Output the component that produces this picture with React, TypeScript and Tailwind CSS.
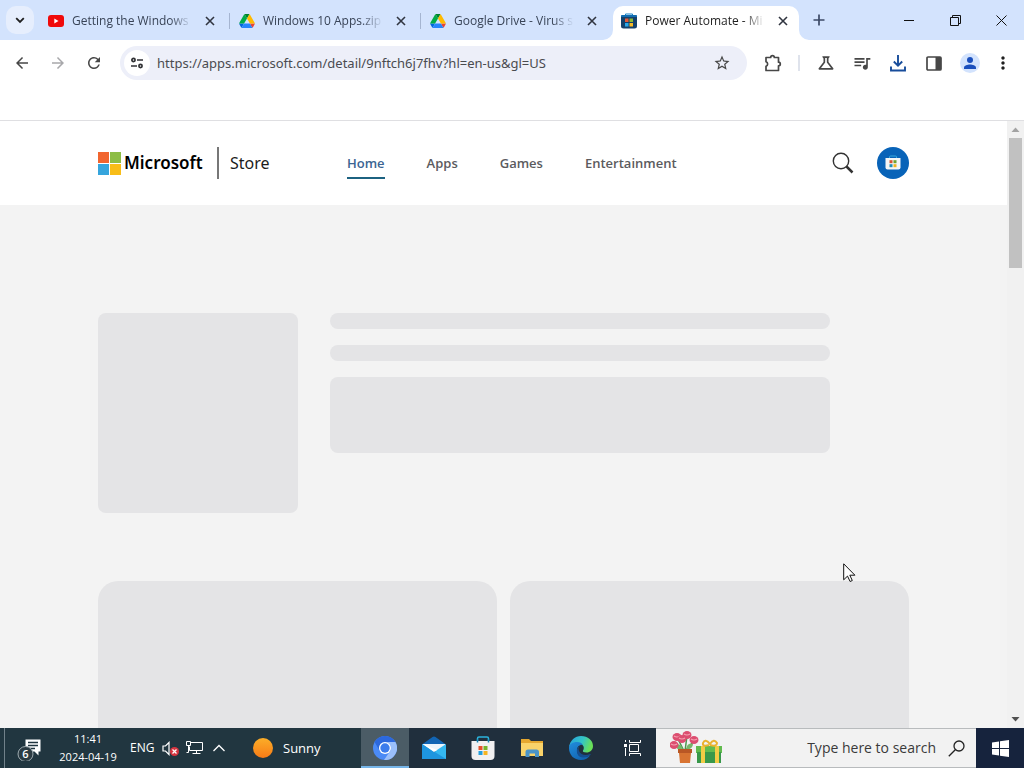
import { useState } from "react";
import type { ReactNode } from "react";
import { MdOutlineScience, MdQueueMusic, MdStarBorder, MdRefresh, MdArrowBack, MdArrowForward, MdMoreVert } from "react-icons/md";

type TabInfo = { title: string; icon: ReactNode };

const TABS: TabInfo[] = [
    { title: "Getting the Windows", icon: <YouTubeIcon /> },
    { title: "Windows 10 Apps.zip", icon: <DriveIcon /> },
    { title: "Google Drive - Virus s", icon: <DriveIcon /> },
    { title: "Power Automate - Mi", icon: <StoreFavicon /> },
];

const NAV = ["Home", "Apps", "Games", "Entertainment"];

export default function App() {
    const [url, setUrl] = useState("https://apps.microsoft.com/detail/9nftch6j7fhv?hl=en-us&gl=US");

    return (
        <div className="relative flex h-screen flex-col overflow-hidden bg-white font-['Open_Sans','Noto_Sans',sans-serif] text-[#1f1f1f]">
            <TabStrip />

            {/* Toolbar */}
            <div className="flex h-[46px] shrink-0 items-center pl-3 pr-[11px] text-[#474747]">
                <button aria-label="Back" className="flex w-5 justify-center"><MdArrowBack size={18} /></button>
                <button aria-label="Forward" className="ml-4 flex w-5 justify-center text-[#a8a8ab]"><MdArrowForward size={18} /></button>
                <button aria-label="Reload" className="ml-4 flex w-5 justify-center"><MdRefresh size={18} /></button>
                <div className="ml-4 flex h-[34px] min-w-0 flex-1 items-center rounded-full bg-[#edeff9] pl-1 pr-4">
                    <button aria-label="View site information" className="flex size-[26px] items-center justify-center rounded-full bg-white">
                        <TuneIcon />
                    </button>
                    <input
                        aria-label="Address and search bar"
                        className="ml-[7px] min-w-0 flex-1 bg-transparent font-['Noto_Sans',sans-serif] text-[13px] leading-5 text-[#4a4b50] outline-none"
                        value={url}
                        onChange={(e) => setUrl(e.target.value)}
                    />
                    <button aria-label="Bookmark this tab"><MdStarBorder size={18} /></button>
                </div>
                <button aria-label="Extensions" className="ml-4 flex w-5 justify-center"><ExtensionIcon /></button>
                <span className="ml-[15px] h-4 w-0.5 bg-[#dfe3ec]" />
                <button aria-label="Labs" className="ml-4 flex w-5 justify-center"><MdOutlineScience size={20} /></button>
                <button aria-label="Media controls" className="ml-4 flex w-5 justify-center"><MdQueueMusic size={20} /></button>
                <button aria-label="Downloads" className="ml-4 flex w-5 justify-center"><DownloadIcon /></button>
                <button aria-label="Side panel" className="ml-4 flex w-5 justify-center"><SidePanelIcon /></button>
                <button aria-label="Profile" className="ml-4 flex w-5 justify-center"><ProfileIcon /></button>
                <button aria-label="Menu" className="ml-[13px] flex w-5 justify-center text-[#1f1f1f]"><MdMoreVert size={20} /></button>
            </div>
            <div className="h-[35px] shrink-0 border-b border-[#dfdfe2]" />

            {/* Page */}
            <div className="flex min-h-0 flex-1">
                <main className="min-w-0 flex-1 overflow-hidden bg-[#f3f3f3]">
                    <StoreHeader />
                    <Skeleton />
                </main>
                <ScrollBar />
            </div>

            <Taskbar />

            <svg className="pointer-events-none absolute left-[843px] top-[563px]" width="13" height="20" viewBox="0 0 13 20">
                <path d="M.7.8v16l3.8-3.7 2.6 5.4 2.2-1-2.5-5.3h5.1z" fill="#fff" stroke="#111" strokeWidth="1" />
            </svg>
        </div>
    );
}

function TabStrip() {
    const [active, setActive] = useState(3);
    return (
        <div className="flex h-10 shrink-0 bg-[#d3e3fd]">
            <button aria-label="Search tabs" className="ml-1.5 mt-1.5 flex size-7 shrink-0 items-center justify-center rounded-[10px] bg-[#e6eefd]">
                <svg width="10" height="7" viewBox="0 0 10 7"><path d="M1.2 1.2 5 5l3.8-3.8" fill="none" stroke="#1f1f1f" strokeWidth="1.8" /></svg>
            </button>
            <div role="tablist" className="ml-1.5 flex min-w-0">
                {TABS.map((tab, i) => {
                    const isActive = i === active;
                    return (
                        <div
                            key={tab.title}
                            className={
                                "relative flex h-[34px] w-[191px] min-w-0 items-center self-end pb-1 pl-2 last:w-[186px] " +
                                (isActive ? "rounded-t-[10px] bg-white" : "")
                            }
                        >
                            {isActive && <TabFeet />}
                            <button role="tab" aria-selected={isActive} onClick={() => setActive(i)} className="flex min-w-0 items-center gap-2">
                                <span className="flex size-4 shrink-0 items-center justify-center">{tab.icon}</span>
                                <span className={"w-[120px] overflow-hidden whitespace-nowrap text-left text-xs leading-4 [mask-image:linear-gradient(to_right,black_82%,transparent)] " + (isActive ? "text-[#1f1f1f]" : "text-[#394457]")}>
                                    {tab.title}
                                </span>
                            </button>
                            <button aria-label={"Close " + tab.title} className="ml-2.5 flex size-4 shrink-0 items-center justify-center">
                                <svg width="10" height="10" viewBox="0 0 10 10"><path d="m1 1 8 8M9 1 1 9" stroke="#303540" strokeWidth="1.6" /></svg>
                            </button>
                            {!isActive && i + 1 !== active && <span className="ml-[11px] h-4 w-px bg-[#a5b5d1]" />}
                        </div>
                    );
                })}
            </div>
            <button aria-label="New tab" className="ml-3 flex w-4 items-center justify-center">
                <svg width="12" height="12" viewBox="0 0 12 12"><path d="M6 .5v11M.5 6h11" stroke="#3c4a66" strokeWidth="1.7" /></svg>
            </button>
            <div className="ml-auto flex">
                <button aria-label="Minimize" className="flex w-[46px] items-center justify-center">
                    <svg width="10" height="10" viewBox="0 0 10 10"><path d="M0 5.5h10" stroke="#111" /></svg>
                </button>
                <button aria-label="Restore" className="flex w-[46px] items-center justify-center">
                    <svg width="11" height="11" viewBox="0 0 11 11"><path d="M.5 2.5h8v8h-8zM2.5 2.5v-2h8v8h-2" fill="none" stroke="#111" /></svg>
                </button>
                <button aria-label="Close" className="flex w-[46px] items-center justify-center">
                    <svg width="11" height="11" viewBox="0 0 11 11"><path d="m.5.5 10 10M10.5.5l-10 10" stroke="#111" /></svg>
                </button>
            </div>
        </div>
    );
}

// Concave corners where the active tab meets the toolbar
function TabFeet() {
    return (
        <>
            <svg className="absolute -left-2.5 bottom-0" width="10" height="10"><path d="M10 0v10H0A10 10 0 0 0 10 0" fill="#fff" /></svg>
            <svg className="absolute -right-2.5 bottom-0" width="10" height="10"><path d="M0 0v10h10A10 10 0 0 1 0 0" fill="#fff" /></svg>
        </>
    );
}

function StoreHeader() {
    const [current, setCurrent] = useState("Home");
    return (
        <header className="flex h-[84px] items-center bg-white px-[98px]">
            <a href="#microsoft" className="flex items-center gap-[3px]">
                <svg width="23" height="23" viewBox="0 0 23 23">
                    <path d="M0 0h11v11H0z" fill="#f1652f" />
                    <path d="M12 0h11v11H12z" fill="#8dbd45" />
                    <path d="M0 12h11v11H0z" fill="#36a5dd" />
                    <path d="M12 12h11v11H12z" fill="#f8bd18" />
                </svg>
                <span className="w-20 whitespace-nowrap font-['Noto_Sans',sans-serif] text-[17px] font-semibold leading-6 text-black">Microsoft</span>
            </a>
            <span className="ml-[13px] h-8 w-0.5 bg-[#777]" />
            <a href="#store" className="ml-[11px] w-[42px] font-['Noto_Sans',sans-serif] text-base leading-6 text-[#1b1b1b]">Store</a>
            <nav className="ml-[75px] flex gap-[42px] pt-1 text-[13px] font-semibold leading-5">
                {NAV.map((item) => (
                    <a
                        key={item}
                        href={"#" + item.toLowerCase()}
                        onClick={() => setCurrent(item)}
                        className={
                            "mt-0.5 border-b-2 pb-1 " +
                            (item === current ? "border-[#1c6281] text-[#3b6492]" : "border-transparent text-[#5b5b5e]")
                        }
                    >
                        {item}
                    </a>
                ))}
            </nav>
            <button aria-label="Search" className="ml-auto">
                <svg width="22" height="22" viewBox="0 0 22 22" fill="none" stroke="#333">
                    <circle cx="9" cy="9" r="7.7" strokeWidth="1.4" />
                    <path d="m14.5 14.5 6 6" strokeWidth="2.5" />
                </svg>
            </button>
            <button aria-label="Account" className="ml-[23px] flex size-8 items-center justify-center rounded-full bg-[#0863b8]">
                <svg width="16" height="16" viewBox="0 0 16 16">
                    <path d="M4.5 3V2q0-1 1-1h5q1 0 1 1v1" fill="none" stroke="#36a9dd" strokeWidth="1" />
                    <path d="M.5 3h15v9.5q0 2-2 2h-11q-2 0-2-2z" fill="#f4f6f6" />
                    <path d="M4.5 5.2h3v3h-3z" fill="#d75431" />
                    <path d="M8.5 5.2h3v3h-3z" fill="#6fa330" />
                    <path d="M4.5 9.2h3v3h-3z" fill="#218eb5" />
                    <path d="M8.5 9.2h3v3h-3z" fill="#f0b51e" />
                </svg>
            </button>
        </header>
    );
}

function Skeleton() {
    return (
        <div className="px-[98px] pt-[108px]">
            <div className="flex gap-8">
                <div className="size-[200px] shrink-0 rounded-lg bg-[#e4e4e6]" />
                <div className="flex max-w-[500px] flex-1 flex-col gap-4">
                    <div className="h-4 rounded-lg bg-[#e4e4e6]" />
                    <div className="h-4 rounded-lg bg-[#e4e4e6]" />
                    <div className="h-[76px] rounded-lg bg-[#e4e4e6]" />
                </div>
            </div>
            <div className="mt-[68px] grid grid-cols-2 gap-[13px]">
                <div className="h-80 rounded-[20px] bg-[#e4e4e6]" />
                <div className="h-80 rounded-[20px] bg-[#e4e4e6]" />
            </div>
        </div>
    );
}

function ScrollBar() {
    return (
        <div className="flex w-[17px] shrink-0 flex-col items-center bg-[#f1f1f1]">
            <svg className="shrink-0" width="17" height="17" viewBox="0 0 17 17"><path d="m4.5 11 4-4.5 4 4.5z" fill="#a3a3a3" /></svg>
            <div className="h-[130px] w-[13px] bg-[#c1c1c1]" />
            <svg className="mt-auto shrink-0" width="17" height="17" viewBox="0 0 17 17"><path d="m4.5 6 4 4.5 4-4.5z" fill="#505050" /></svg>
        </div>
    );
}

function Taskbar() {
    return (
        <footer className="flex h-10 shrink-0 bg-[#213640] text-white">
            <span className="ml-1 w-px bg-[#71818a]" />
            <button aria-label="Notifications" className="ml-3 flex w-7 items-center">
                <svg width="26" height="26" viewBox="0 0 26 26">
                    <path d="M8.5 4.5h15v12h-2v4l-4-4h-9z" fill="#fff" />
                    <path d="M11 7.5h10M11 10.5h10M11 13.5h7" stroke="#213640" strokeWidth="1.3" />
                    <circle cx="8.5" cy="19" r="7.5" fill="#2b3b43" stroke="#9eabb0" />
                    <text x="8.5" y="23" textAnchor="middle" fontSize="11" fontWeight="600" fill="#fff">6</text>
                </svg>
            </button>
            <div className="ml-2 w-[70px] whitespace-nowrap pt-0.5 text-center text-[11px] leading-[18px]">
                <div>11:41</div>
                <div>2024-04-19</div>
            </div>
            <button className="ml-[7px] w-6 self-center text-xs leading-5">ENG</button>
            <button aria-label="Volume muted" className="ml-2 flex w-[18px] items-center">
                <svg width="18" height="18" viewBox="0 0 18 18">
                    <path d="M1 7h2.500L7 3.500v12L3.500 12H1z" fill="none" stroke="#fff" strokeWidth="1.2" />
                    <circle cx="12.5" cy="12.5" r="4.500" fill="#d5343f" />
                    <path d="m10.5 10.5 4 4m0-4-4 4" stroke="#fff" strokeWidth="1.3" />
                </svg>
            </button>
            <button aria-label="Network" className="ml-1.5 flex w-[17px] items-center">
                <svg width="17" height="16" viewBox="0 0 17 16" fill="none" stroke="#fff">
                    <path d="M5 2.5h11.500v8H3.500V6.500M10.500 10.500v3M6.500 13.500h8M.500 1.500h4v4h-4zM2.500 5.500v7h-2" />
                </svg>
            </button>
            <button aria-label="Show hidden icons" className="ml-2.5 flex w-3 items-center">
                <svg width="12" height="8" viewBox="0 0 12 8"><path d="m.5 7 5.500-5.500L11.500 7" fill="none" stroke="#fff" strokeWidth="1.3" /></svg>
            </button>
            <button className="ml-7 flex items-center gap-2.5 text-[13px] leading-5">
                <span className="size-5 rounded-full bg-gradient-to-b from-[#fbae28] to-[#f77a16]" />
                Sunny
            </button>
            <div className="ml-auto flex bg-[#202f3d]">
                <button aria-label="Chromium" className="flex w-12 items-center justify-center border-b-2 border-[#76b5e8] bg-[#4b5c66] pt-0.5"><ChromiumIcon /></button>
                <button aria-label="Mail" className="ml-px flex w-12 items-center justify-center"><MailIcon /></button>
                <button aria-label="Microsoft Store" className="ml-px flex w-12 items-center justify-center"><StoreIcon /></button>
                <button aria-label="File Explorer" className="ml-px flex w-12 items-center justify-center"><FolderIcon /></button>
                <button aria-label="Edge" className="ml-px flex w-12 items-center justify-center"><EdgeIcon /></button>
                <button aria-label="Task view" className="ml-[3px] flex w-12 items-center justify-center">
                    <svg width="17" height="16" viewBox="0 0 17 16" fill="none" stroke="#fff">
                        <path d="M5.5 0v2.500h11V0M5.500 4.500h9v7h-9zM5.500 16v-2.500h11V16M1.500 0v2M1.500 8v8" />
                        <path d="M0 4h3v3H0z" fill="#fff" stroke="none" />
                    </svg>
                </button>
            </div>
            <label className="flex w-80 items-center border-y border-[#b8bbbd] bg-[#f2f2f2] pl-3.5">
                <FlowersIcon />
                <input
                    aria-label="Type here to search"
                    placeholder="Type here to search"
                    className="min-w-0 flex-1 bg-transparent text-right text-sm leading-5 text-[#222] outline-none placeholder:text-[#3a3a3a]"
                />
                <svg className="ml-3 mr-[11px]" width="17" height="17" viewBox="0 0 17 17" fill="none" stroke="#222" strokeWidth="1.3">
                    <circle cx="11" cy="6" r="5" />
                    <path d="M7.3 9.7.8 16.2" />
                </svg>
            </label>
            <button aria-label="Start" className="flex w-12 items-center justify-center bg-[#16233d]">
                <svg width="17" height="17" viewBox="0 0 17 17" fill="#fff">
                    <path d="M0 2.5 7 1.5V8H0zM8 1.3 17 0v8H8zM0 9h7v6.500l-7-1zM8 9h9v8l-9-1.300z" />
                </svg>
            </button>
        </footer>
    );
}

function YouTubeIcon() {
    return (
        <svg width="16" height="12" viewBox="0 0 16 12">
            <rect width="16" height="12" rx="3" fill="#f00a0a" />
            <path d="m6.3 3.5 4.2 2.5-4.2 2.5z" fill="#fff" />
        </svg>
    );
}

function DriveIcon() {
    return (
        <svg className="shrink-0" width="16" height="14" viewBox="0 0 87.3 78">
            <path d="m6.6 66.85 3.85 6.65c.8 1.4 1.95 2.5 3.3 3.3L27.5 53H0c0 1.55.4 3.1 1.2 4.5z" fill="#0066da" />
            <path d="M43.65 25 29.9 1.2c-1.35.8-2.5 1.9-3.3 3.3L1.2 48.5A9 9 0 0 0 0 53h27.5z" fill="#00ac47" />
            <path d="M73.55 76.8c1.35-.8 2.5-1.9 3.3-3.3l1.6-2.75L86.1 57.5c.8-1.4 1.2-2.95 1.2-4.5H59.8l5.85 11.5z" fill="#ea4335" />
            <path d="M43.65 25 57.4 1.2C56.05.4 54.5 0 52.9 0H34.4c-1.6 0-3.15.45-4.5 1.2z" fill="#00832d" />
            <path d="M59.8 53H27.5L13.75 76.8c1.35.8 2.9 1.2 4.5 1.2h50.8c1.6 0 3.15-.45 4.5-1.2z" fill="#2684fc" />
            <path d="M73.4 26.5 60.7 4.5c-.8-1.4-1.95-2.5-3.3-3.3L43.65 25 59.8 53h27.45c0-1.55-.4-3.1-1.2-4.5z" fill="#ffba00" />
        </svg>
    );
}

function StoreFavicon() {
    return (
        <svg width="16" height="16" viewBox="0 0 16 16">
            <path d="M4.5 3V1h7v2" fill="none" stroke="#1683c9" />
            <path d="M1 2.500h14a1 1 0 0 1 1 1V13a2.500 2.500 0 0 1-2.500 2.500h-11A2.500 2.500 0 0 1 0 13V3.500a1 1 0 0 1 1-1" fill="#14416c" />
            <path d="M0 4V3a1 1 0 0 1 1-1h14a1 1 0 0 1 1 1v1z" fill="#126db0" />
            <path d="M4 5.500h3.500V9H4z" fill="#e65a36" />
            <path d="M8.500 5.500H12V9H8.500z" fill="#8cb936" />
            <path d="M4 10h3.500v3.500H4z" fill="#28a8ea" />
            <path d="M8.500 10H12v3.500H8.500z" fill="#f8bb25" />
        </svg>
    );
}

function TuneIcon() {
    return (
        <svg width="14" height="12" viewBox="0 0 14 12" fill="none" stroke="#303134" strokeWidth="1.7">
            <circle cx="3.500" cy="3" r="1.600" />
            <path d="M7 3h6M1 9h6" />
            <circle cx="10.500" cy="9" r="1.600" />
        </svg>
    );
}

function ExtensionIcon() {
    return (
        <svg width="18" height="18" viewBox="0 0 18 18" fill="none" stroke="#474747" strokeWidth="1.7">
            <path d="M2 3.500h4.700a1.800 1.800 0 0 1 3.600 0h4.200v4.700a1.800 1.800 0 0 1 0 3.600v4.700H2v-4.300a2.300 2.300 0 0 0 0-4.400z" strokeLinejoin="round" />
        </svg>
    );
}

function DownloadIcon() {
    return (
        <svg width="16" height="17" viewBox="0 0 16 17" fill="none" stroke="#184d9b" strokeWidth="1.9">
            <path d="M8 0v10.500M3.800 6.500 8 10.700l4.200-4.200M1 11.500v4h14v-4" />
        </svg>
    );
}

function SidePanelIcon() {
    return (
        <svg width="16" height="15" viewBox="0 0 16 15">
            <rect x="1" y="1" width="14" height="13" rx="1" fill="none" stroke="#474747" strokeWidth="1.7" />
            <path d="M9.500 1H15v13H9.500z" fill="#474747" />
        </svg>
    );
}

function ProfileIcon() {
    return (
        <svg width="20" height="20" viewBox="0 0 20 20">
            <circle cx="10" cy="10" r="10" fill="#d3e3fd" />
            <circle cx="10" cy="7" r="3" fill="#1a4fbd" />
            <path d="M4 16v-1.500c0-2 3.500-3 6-3s6 1 6 3V16z" fill="#1a4fbd" />
        </svg>
    );
}

function ChromiumIcon() {
    return (
        <svg width="24" height="24" viewBox="0 0 24 24">
            <circle cx="12" cy="12" r="12" fill="#4b8af5" />
            <path d="M12 6h10.400A12 12 0 0 1 11 24l6.200-9a6 6 0 0 0-5.200-9" fill="#9bbffa" />
            <path d="M1.600 6a12 12 0 0 1 20.800 0H12a6 6 0 0 0-5.200 9z" fill="#2c68dd" />
            <circle cx="12" cy="12" r="6" fill="#fff" />
            <circle cx="12" cy="12" r="4.700" fill="#3c7cec" />
        </svg>
    );
}

function MailIcon() {
    return (
        <svg width="24" height="24" viewBox="0 0 24 24">
            <path d="M0 8.500 10.500 1q1.500-1 3 0L24 8.500V14H0z" fill="#1265b4" />
            <path d="M1 8h22v7H1z" fill="#edf5fb" />
            <path d="m0 8 12 8 12-8v15H0z" fill="#35b8f1" />
            <path d="m0 8 24 15H0z" fill="#1e95df" />
            <path d="m1 8 11 8 3-2z" fill="#fff" />
        </svg>
    );
}

function StoreIcon() {
    return (
        <svg width="24" height="24" viewBox="0 0 24 24">
            <path d="M6.500 7V2.500q0-1.500 1.500-1.500h8q1.500 0 1.500 1.500V7" fill="none" stroke="#2bb4dd" strokeWidth="1.5" />
            <path d="M.5 5h23v15q0 4-4 4h-15q-4 0-4-4z" fill="#f1f0f1" />
            <path d="M6.500 3.500v3M17.500 3.500v3" stroke="#1684b5" strokeWidth="1.5" />
            <path d="M7.500 10h4v4h-4z" fill="#e64f2b" />
            <path d="M12.500 10h4v4h-4z" fill="#75b52d" />
            <path d="M7.500 15h4v4h-4z" fill="#229fde" />
            <path d="M12.500 15h4v4h-4z" fill="#f5b421" />
        </svg>
    );
}

function FolderIcon() {
    return (
        <svg width="22" height="20" viewBox="0 0 22 20">
            <path d="M0 1h8l2 2h12v5H0z" fill="#e5a72f" />
            <path d="M0 5h22v13H0z" fill="#f9d36a" />
            <path d="M4.500 19v-5q0-2.500 2.500-2.500h8.500q2.500 0 2.500 2.500v5h-4v-3.500H8.500V19z" fill="#4a94c9" />
        </svg>
    );
}

function EdgeIcon() {
    return (
        <svg width="24" height="24" viewBox="0 0 24 24">
            <defs>
                <linearGradient id="edge-top" x1="0" y1="0" x2="1" y2="0.3">
                    <stop offset="0" stopColor="#259fdf" />
                    <stop offset="0.6" stopColor="#34c5c6" />
                    <stop offset="1" stopColor="#69df58" />
                </linearGradient>
                <linearGradient id="edge-side" x1="0" y1="0" x2="0.7" y2="1">
                    <stop offset="0" stopColor="#218ddd" />
                    <stop offset="1" stopColor="#1163b0" />
                </linearGradient>
            </defs>
            <path d="M0 11C1 4.500 6 0 12 0c7 0 12 4.500 12 10 0 4-3 6.500-6.500 6.500-3 0-4-1-3.500-2 1.200-1.300 1.200-4-.5-5.500C9 5 3 7 0 11" fill="url(#edge-top)" />
            <path d="M0 12c0-4 4-6 8-6 3 0 5 1.300 6 3-2.800-.7-6.500 1.500-6 6 .4 4 4 6.500 8 6 2-.2 4-1 5.500-2.300C19.500 22 16 24 12 24 5 24 0 19 0 12" fill="url(#edge-side)" />
            <path d="M10.500 10C7 12 7 18 10.500 20.500c4 2.500 8.500 0 11-1.800.4-.4 0-1-.5-.7-4 2-9.500 1.200-11-3-.7-2-.5-3.500.5-5" fill="#154d8e" />
        </svg>
    );
}

function FlowersIcon() {
    return (
        <svg className="mr-auto shrink-0" width="54" height="34" viewBox="0 0 54 34">
            <path d="M14 20 4 13M14 20 7 6M15 20l2-15M15 20l9-10" fill="none" stroke="#4c9851" strokeWidth="1.5" />
            <path d="M13 19Q5 20 7 13q5 0 6 6m3 0q1-8 7-6 0 5-7 6" fill="#77b66b" />
            {[[4, 14], [7, 6], [17, 4], [24, 9], [12, 8]].map(([x, y]) => (
                <g key={x}>
                    <ellipse cx={x} cy={y} rx="4.500" ry="4" fill="#dc4e70" />
                    <path d={`M${x - 3} ${y - 1}q3 2 6 0`} fill="none" stroke="#f5a2b2" strokeWidth="1.2" />
                </g>
            ))}
            <path d="M8 18h14v4h-1l-1 10H10L9 22H8z" fill="#d87432" />
            <path d="M8 18h14v4H8z" fill="#b95725" />
            <path d="M26 15h26v7H26z" fill="#61bb4e" />
            <path d="M27 21h24v11H27z" fill="#38984a" />
            <path d="M31 15h4v17h-4zM45 15h4v17h-4z" fill="#f1cc45" />
            <path d="M39 14q-7 2-6-2 2-5 7 1 4-6 7-1 0 4-7 2" fill="none" stroke="#eab22f" strokeWidth="2" />
        </svg>
    );
}
